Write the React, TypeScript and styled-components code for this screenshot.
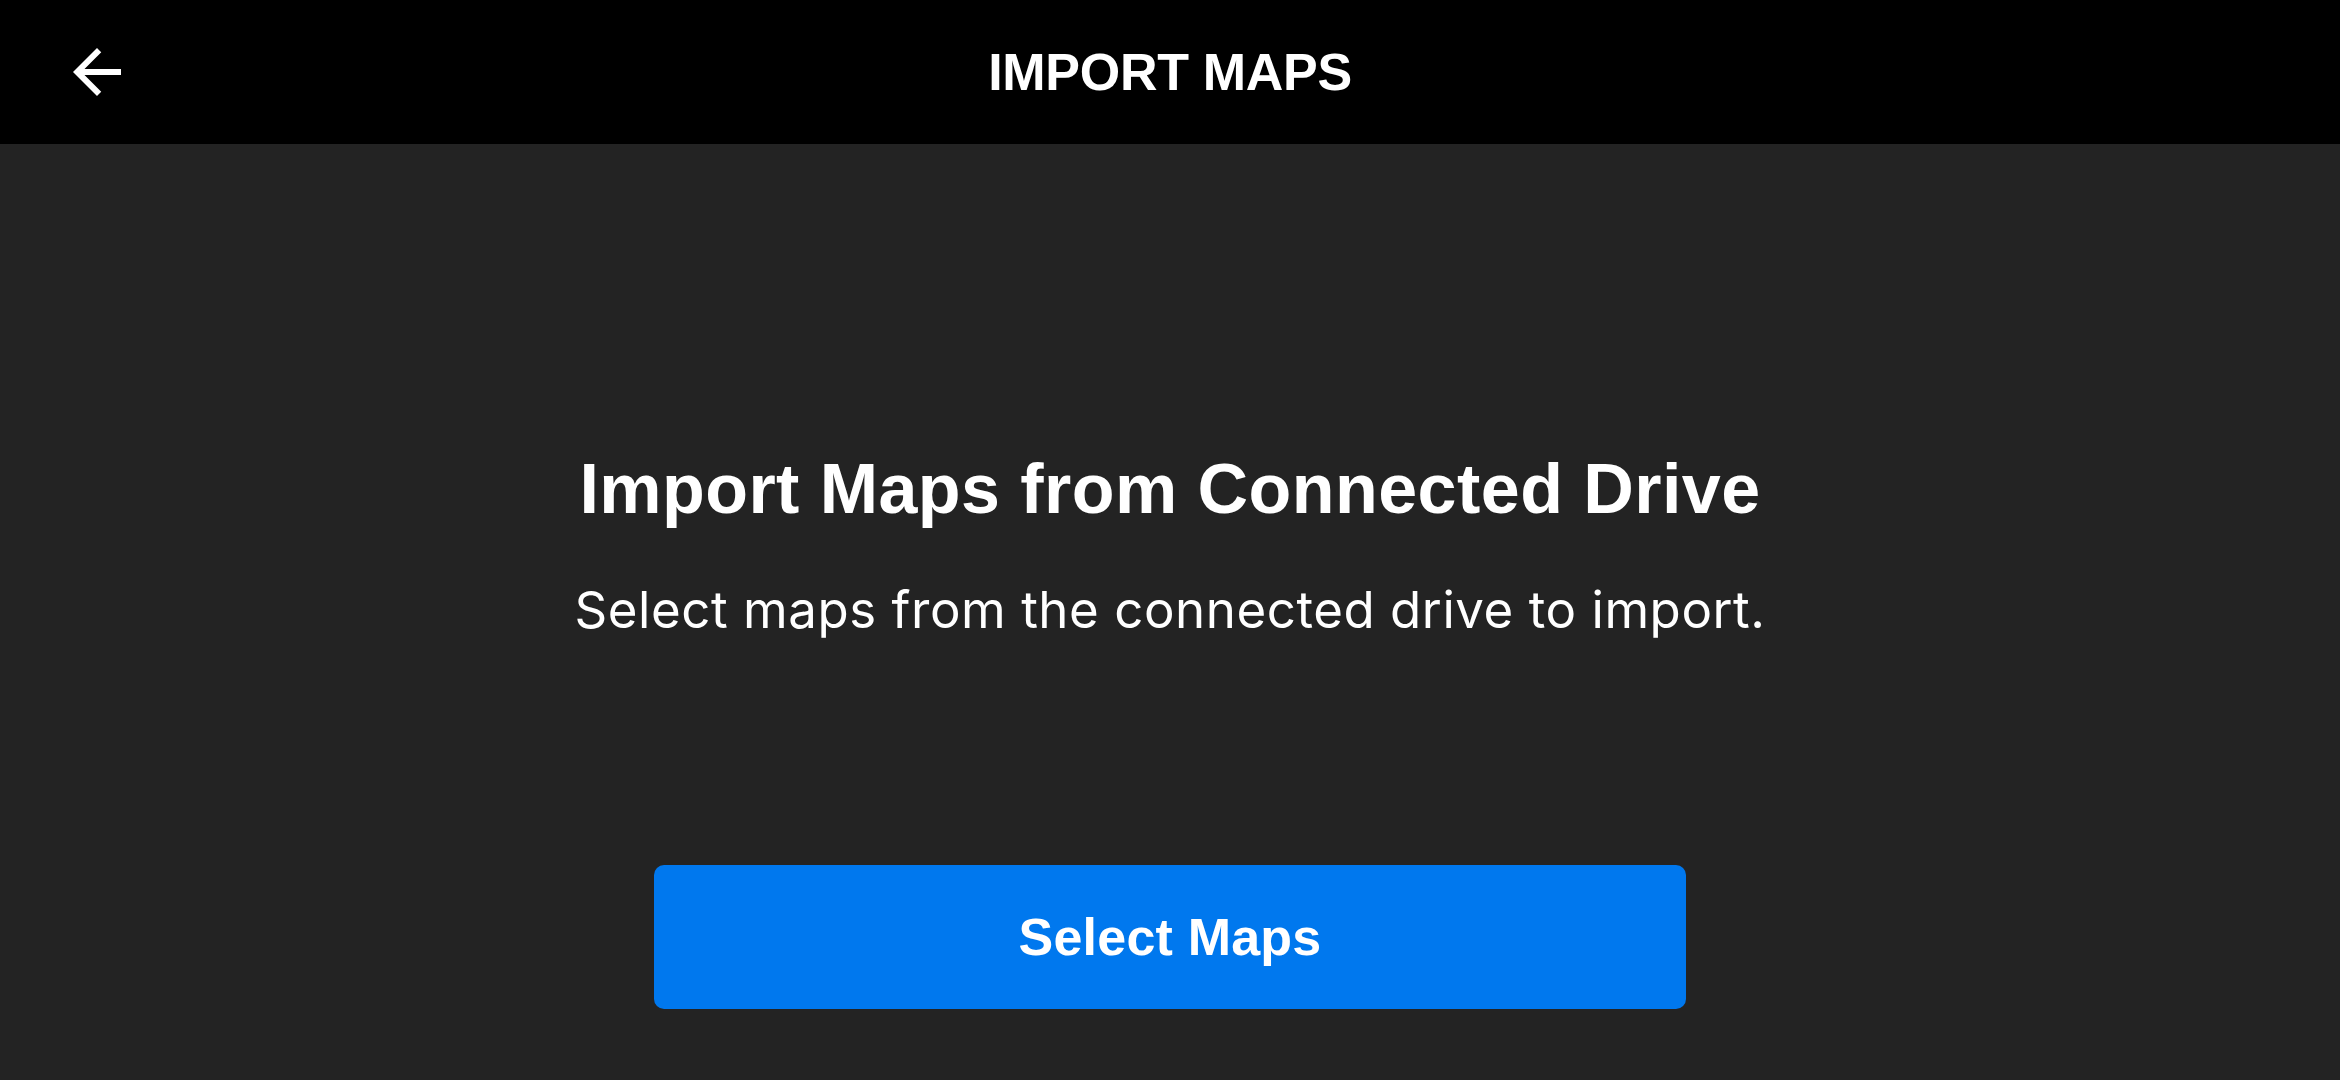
import styled, { createGlobalStyle } from "styled-components";

const GlobalStyle = createGlobalStyle`
  html, body {
    margin: 0;
    padding: 0;
    background: #232323;
  }

  body {
    font-family: "Liberation Sans", Arial, sans-serif;
    color: #ffffff;
  }
`;

const Screen = styled.div`
  width: 2340px;
  height: 1080px;
  display: flex;
  flex-direction: column;
  background: #232323;
  overflow: hidden;
`;

const TopBar = styled.header`
  height: 144px;
  flex-shrink: 0;
  display: grid;
  grid-template-columns: 200px 1fr 200px;
  align-items: center;
  background: #000000;
`;

const BackButton = styled.button`
  width: 72px;
  height: 72px;
  margin-left: 61px;
  padding: 0;
  border: none;
  background: transparent;
  color: #ffffff;
  cursor: pointer;
  display: flex;

  svg {
    width: 72px;
    height: 72px;
  }
`;

const TopTitle = styled.h1`
  margin: 0;
  text-align: center;
  font-size: 52px;
  font-weight: 700;
  line-height: 1;
  letter-spacing: -0.3px;
`;

const Content = styled.main`
  flex: 1;
  display: flex;
  flex-direction: column;
  align-items: center;
  padding-top: 303px;
`;

const Heading = styled.h2`
  margin: 0;
  font-size: 70px;
  font-weight: 700;
  line-height: 84px;
  letter-spacing: 0.45px;
`;

const Subtitle = styled.p`
  margin: 50px 0 0;
  font-family: Inter, "Liberation Sans", sans-serif;
  font-size: 51px;
  font-weight: 400;
  line-height: 58px;
  letter-spacing: 0.55px;
`;

const PrimaryButton = styled.button`
  margin-top: 226px;
  width: 1032px;
  height: 144px;
  border: none;
  border-radius: 10px;
  background: #0078ee;
  color: #ffffff;
  font-family: inherit;
  font-size: 52px;
  font-weight: 700;
  letter-spacing: 0.2px;
  cursor: pointer;
`;

const ArrowBack = () => (
  <svg viewBox="0 0 24 24" fill="currentColor">
    <path d="M20 11H7.83l5.59-5.59L12 4l-8 8 8 8 1.41-1.41L7.83 13H20v-2z" />
  </svg>
);

const App = () => {
  return (
    <Screen>
      <GlobalStyle />
      <TopBar>
        <BackButton aria-label="Back">
          <ArrowBack />
        </BackButton>
        <TopTitle>IMPORT MAPS</TopTitle>
        <div />
      </TopBar>
      <Content>
        <Heading>Import Maps from Connected Drive</Heading>
        <Subtitle>Select maps from the connected drive to import.</Subtitle>
        <PrimaryButton>Select Maps</PrimaryButton>
      </Content>
    </Screen>
  );
};

export default App;
